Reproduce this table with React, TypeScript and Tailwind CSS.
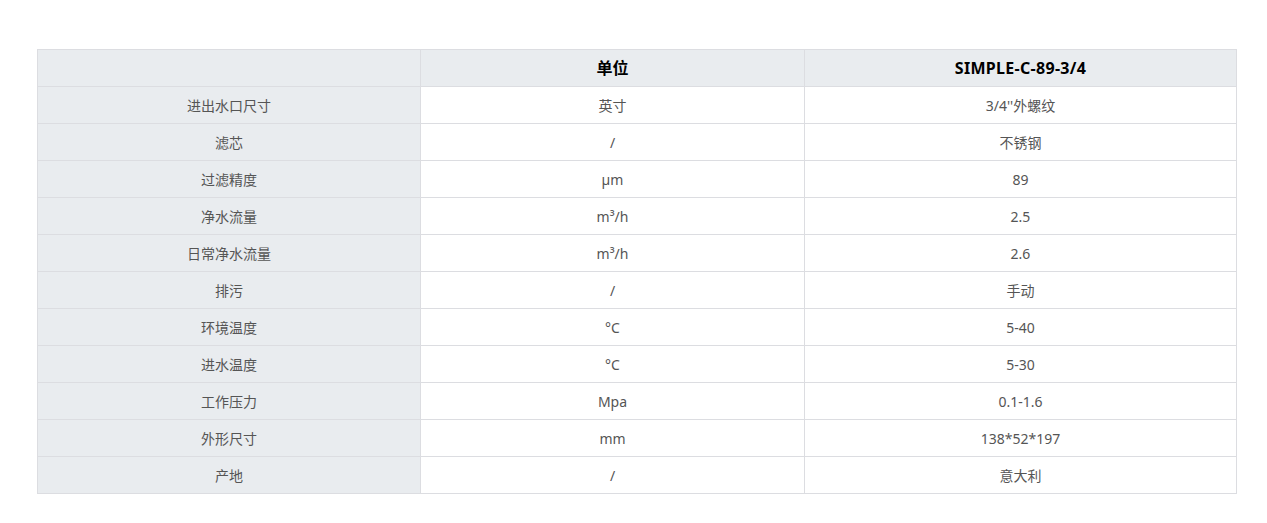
import React from "react";

const rows: [string, string, React.ReactNode][] = [
  ["进出水口尺寸", "英寸", "3/4''外螺纹"],
  ["滤芯", "/", "不锈钢"],
  ["过滤精度", "µm", "89"],
  ["净水流量", "m³/h", "2.5"],
  ["日常净水流量", "m³/h", "2.6"],
  ["排污", "/", "手动"],
  ["环境温度", "°C", "5-40"],
  ["进水温度", "°C", "5-30"],
  ["工作压力", "Mpa", "0.1-1.6"],
  ["外形尺寸", "mm", "138*52*197"],
  ["产地", "/", "意大利"],
];

export default function App() {
  return (
    <div
      className="w-[1267px] h-[523px] bg-white pt-[49px] pl-[37px]"
      style={{ fontFamily: '"Noto Sans", "Noto Sans CJK SC", sans-serif' }}
    >
      <table className="border-collapse table-fixed w-[1200px] text-[14px] text-[#555]">
        <colgroup>
          <col className="w-[383px]" />
          <col className="w-[384px]" />
          <col className="w-[432px]" />
        </colgroup>
        <thead>
          <tr className="h-[37px]">
            <th className="border border-[#dcdde1] bg-[#e9ecef]"></th>
            <th className="border border-[#dcdde1] bg-[#e9ecef] text-[16px] font-bold text-black">单位</th>
            <th className="border border-[#dcdde1] bg-[#e9ecef] text-[16px] font-bold text-black tracking-[0.3px]">SIMPLE-C-89-3/4</th>
          </tr>
        </thead>
        <tbody>
          {rows.map((r, i) => (
            <tr key={i} className="h-[37px]">
              <td className="border border-[#dcdde1] bg-[#e9ecef] text-center p-0">{r[0]}</td>
              <td className="border border-[#dcdde1] text-center p-0">{r[1]}</td>
              <td className="border border-[#dcdde1] text-center p-0">{r[2]}</td>
            </tr>
          ))}
        </tbody>
      </table>
    </div>
  );
}
